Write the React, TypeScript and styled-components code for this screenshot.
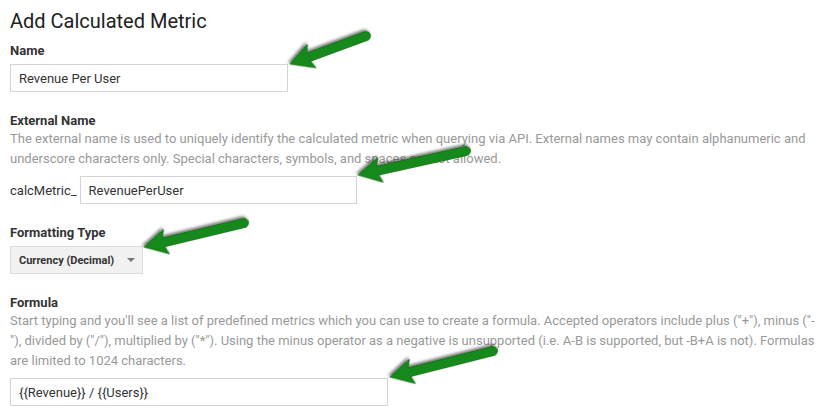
import React from "react";
import styled, { createGlobalStyle } from "styled-components";

const Global = createGlobalStyle`
  html, body { margin: 0; padding: 0; background: #fff; }
  body { font-family: Roboto, "Liberation Sans", Arial, sans-serif; overflow: hidden; }
`;

const Page = styled.div`
  position: relative;
  width: 840px;
  height: 407px;
  padding: 9px 10px 0 10px;
  box-sizing: border-box;
  overflow: hidden;
`;

const Title = styled.h1`
  margin: 0 0 10px 0;
  font-size: 20px;
  line-height: 24px;
  font-weight: 400;
  color: #212121;
`;

const Section = styled.section`
  display: flex;
  flex-direction: column;
  align-items: flex-start;
  margin-bottom: 21px;
`;

const Label = styled.div<{ $tight?: boolean }>`
  font-size: 13px;
  line-height: 16px;
  font-weight: 700;
  color: #333;
  margin-bottom: ${(p) => (p.$tight ? "0" : "5px")};
`;

const Help = styled.p`
  margin: 0 0 7px 0;
  font-size: 13px;
  line-height: 20px;
  color: #999;
  width: 815px;
`;

const Row = styled.div`
  display: flex;
  align-items: center;
  gap: 3px;
`;

const Prefix = styled.span`
  font-size: 13px;
  color: #333;
`;

const TextBox = styled.div<{ $w: number }>`
  width: ${(p) => p.$w}px;
  height: 28px;
  box-sizing: border-box;
  border: 1px solid #d4d4d4;
  padding: 0 8px;
  display: flex;
  align-items: center;
  font-size: 13px;
  color: #333;
  background: #fff;
`;

const Select = styled.div`
  width: 133px;
  height: 28px;
  box-sizing: border-box;
  border: 1px solid #dcdcdc;
  background: #f1f1f1;
  display: flex;
  align-items: center;
  justify-content: space-between;
  padding: 0 7px 0 8px;
  font-size: 11px;
  font-weight: 700;
  color: #333;
`;

const Caret = styled.span`
  width: 0;
  height: 0;
  border-left: 4px solid transparent;
  border-right: 4px solid transparent;
  border-top: 4px solid #777;
`;

const ArrowSvg = styled.svg`
  position: absolute;
  overflow: visible;
  pointer-events: none;
  left: 0;
  top: 0;
`;

type ArrowProps = { tipX: number; tipY: number; tailX: number; tailY: number };

const Arrow = ({ tipX, tipY, tailX, tailY }: ArrowProps) => {
  const dx = tipX - tailX;
  const dy = tipY - tailY;
  const len = Math.sqrt(dx * dx + dy * dy);
  const ang = (Math.atan2(dy, dx) * 180) / Math.PI;
  const head = 23;
  const hw = 12.5;
  const sw = 4.5;
  const d = `M0 ${-sw} L${len - head + 3} ${-sw} L${len - head} ${-hw} L${len} 0 L${len - head} ${hw} L${len - head + 3} ${sw} L0 ${sw} A${sw} ${sw} 0 0 1 0 ${-sw} Z`;
  return (
    <ArrowSvg width="840" height="407" style={{ width: 840, height: 407 }}>
      <defs>
        <filter id="shadow" x="-20%" y="-50%" width="140%" height="200%">
          <feDropShadow dx="1" dy="2" stdDeviation="1.5" floodColor="#000" floodOpacity="0.55" />
        </filter>
      </defs>
      <g transform={`translate(${tailX} ${tailY}) rotate(${ang})`} filter="url(#shadow)">
        <path d={d} fill="#14891a" stroke="#0d6911" strokeWidth="0.8" strokeLinejoin="round" />
      </g>
    </ArrowSvg>
  );
};

export default function App() {
  return (
    <>
      <Global />
      <Page>
        <Title>Add Calculated Metric</Title>
        <Section>
          <Label>Name</Label>
          <TextBox $w={278}>Revenue Per User</TextBox>
        </Section>
        <Section>
          <Label $tight>External Name</Label>
          <Help>
            The external name is used to uniquely identify the calculated metric when querying via API. External names may contain alphanumeric and underscore characters only. Special characters, symbols, and spaces are not allowed.
          </Help>
          <Row>
            <Prefix>calcMetric_</Prefix>
            <TextBox $w={277}>RevenuePerUser</TextBox>
          </Row>
        </Section>
        <Section>
          <Label>Formatting Type</Label>
          <Select>
            <span>Currency (Decimal)</span>
            <Caret />
          </Select>
        </Section>
        <Section>
          <Label $tight>Formula</Label>
          <Help>
            Start typing and you'll see a list of predefined metrics which you can use to create a formula. Accepted operators include plus ("+"), minus ("-"), divided by ("/"), multiplied by ("*"). Using the minus operator as a negative is unsupported (i.e. A-B is supported, but -B+A is not). Formulas are limited to 1024 characters.
          </Help>
          <TextBox $w={378}>{"{{Revenue}} / {{Users}}"}</TextBox>
        </Section>
        <Arrow tipX={290} tipY={64} tailX={366} tailY={36} />
        <Arrow tipX={358} tipY={175} tailX={466} tailY={151} />
        <Arrow tipX={144} tipY={247} tailX={244} tailY={223} />
        <Arrow tipX={390} tipY={377} tailX={493} tailY={351} />
      </Page>
    </>
  );
}
